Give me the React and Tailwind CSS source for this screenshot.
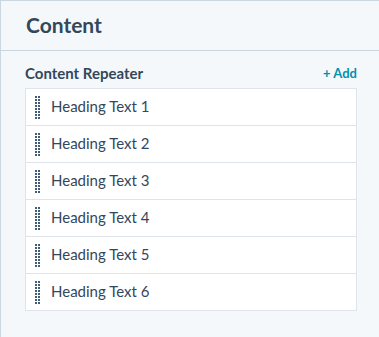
export default function App() {
  const items = ['Heading Text 1', 'Heading Text 2', 'Heading Text 3', 'Heading Text 4', 'Heading Text 5', 'Heading Text 6'];

  return (
    <div
      className="w-[379px] h-[337px] bg-[#f5f8fa] border-l border-t border-[#cbd6e2] text-[#33475b] overflow-hidden"
      style={{ fontFamily: 'Lato, "Open Sans", sans-serif' }}
    >
      <div className="h-[50px] border-b border-[#cbd6e2] flex items-center pl-[25px]">
        <h1 className="text-[21px] font-bold leading-none -mt-[3px]">Content</h1>
      </div>
      <div className="pl-[24px] pr-[22px] pt-[14px]">
        <div className="flex items-center justify-between h-[17px]">
          <span className="text-[15px] font-bold">Content Repeater</span>
          <button className="text-[13px] font-bold text-[#0091ae]">+ Add</button>
        </div>
        <ul className="mt-[6px] bg-white border border-[#dfe3eb]">
          {items.map((item, i) => (
            <li
              key={item}
              className={`h-[36px] box-content flex items-center pl-[9px] ${i > 0 ? 'border-t border-[#dfe3eb]' : ''}`}
            >
              <svg width="5" height="23" viewBox="0 0 5 23" className="shrink-0">
                {[0, 1, 2, 3, 4, 5, 6, 7].map((r) => (
                  <g key={r} fill="#425b76">
                    <rect x="0" y={r * 3} width="2" height="2" />
                    <rect x="3" y={r * 3} width="2" height="2" />
                  </g>
                ))}
              </svg>
              <span className="ml-[11px] text-[15px] -mt-[1px]">{item}</span>
            </li>
          ))}
        </ul>
      </div>
    </div>
  );
}
